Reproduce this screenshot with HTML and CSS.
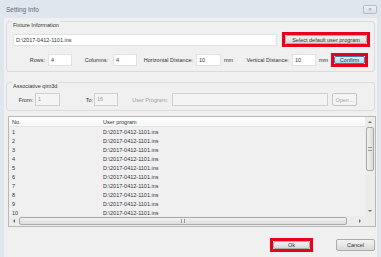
FILE: index.html
```html
<!DOCTYPE html>
<html lang="en">
<head>
  <meta charset="UTF-8">
  <title>Setting Info</title>
  <link rel="stylesheet" href="styles.css">
</head>
<body>
  <div class="window">
    <div class="titlebar">
      <span class="title">Setting Info</span>
      <span class="close">&#x2715;</span>
    </div>

    <div class="client">
      <div class="group fixture">
        <div class="group-label">Fixture Information</div>
        <div class="line">
          <div class="field path">D:\2017-0412-1101.ins</div>
          <div class="mark mark-select"><div class="btn">Select default user program</div></div>
        </div>
        <div class="line params">
          <span class="lbl w-rows">Rows:</span>
          <div class="field num">4</div>
          <span class="lbl w-cols">Columns:</span>
          <div class="field num">4</div>
          <span class="lbl w-hdist">Horizontal Distance:</span>
          <div class="field num wide">10</div>
          <span class="unit w-mm1">mm</span>
          <span class="lbl w-vdist">Vertical Distance:</span>
          <div class="field num">10</div>
          <span class="unit w-mm2">mm</span>
          <div class="mark mark-confirm"><div class="btn btn-hot">Confirm</div></div>
        </div>
      </div>

      <div class="group assoc">
        <div class="group-label">Associative qim3d</div>
        <div class="line">
          <span class="lbl w-from">From:</span>
          <div class="field dis w-in1">1</div>
          <span class="lbl w-to">To:</span>
          <div class="field dis w-in2">16</div>
          <span class="lbl off w-prog">User Program:</span>
          <div class="field dis w-in3"></div>
          <div class="btn btn-off">Open...</div>
        </div>
      </div>

      <div class="list">
        <div class="rows">
          <div class="row head"><span class="c-no">No.</span><span>User program</span></div>
          <div class="row"><span class="c-no">1</span><span>D:\2017-0412-1101.ins</span></div>
          <div class="row"><span class="c-no">2</span><span>D:\2017-0412-1101.ins</span></div>
          <div class="row"><span class="c-no">3</span><span>D:\2017-0412-1101.ins</span></div>
          <div class="row"><span class="c-no">4</span><span>D:\2017-0412-1101.ins</span></div>
          <div class="row"><span class="c-no">5</span><span>D:\2017-0412-1101.ins</span></div>
          <div class="row"><span class="c-no">6</span><span>D:\2017-0412-1101.ins</span></div>
          <div class="row"><span class="c-no">7</span><span>D:\2017-0412-1101.ins</span></div>
          <div class="row"><span class="c-no">8</span><span>D:\2017-0412-1101.ins</span></div>
          <div class="row"><span class="c-no">9</span><span>D:\2017-0412-1101.ins</span></div>
          <div class="row"><span class="c-no">10</span><span>D:\2017-0412-1101.ins</span></div>
        </div>
        <div class="vscroll">
          <span class="arrow"><i class="tri up"></i></span>
          <span class="vthumb"><i class="grip"></i></span>
          <span class="track"></span>
          <span class="arrow"><i class="tri down"></i></span>
        </div>
        <div class="hscroll">
          <span class="arrow"><i class="tri left"></i></span>
          <span class="hthumb"><i class="grip"></i></span>
          <span class="track"></span>
          <span class="arrow"><i class="tri right"></i></span>
        </div>
        <div class="corner"></div>
      </div>

      <div class="footer">
        <div class="mark mark-ok"><div class="btn">Ok</div></div>
        <div class="btn btn-cancel">Cancel</div>
      </div>
    </div>
  </div>
</body>
</html>
```

FILE: styles.css
```css
* { box-sizing: border-box; }
body {
  margin: 0;
  width: 381px;
  height: 257px;
  overflow: hidden;
  font-family: "Liberation Sans", Arial, sans-serif;
  font-size: 5.5px;
  color: #333;
  background: #dfe6ee;
}

.window { height: 257px; display: flex; flex-direction: column; }

.titlebar {
  height: 18px;
  display: flex;
  align-items: center;
  justify-content: space-between;
  padding: 0 4px 0 6px;
}
.title { font-size: 6.5px; color: #5e6b7a; }
.close {
  width: 14px;
  height: 9px;
  border: 1px solid #b3bcc7;
  border-radius: 2px;
  background: linear-gradient(#eef2f6, #d9e0e8);
  color: #8a96a3;
  font-size: 5px;
  line-height: 7px;
  text-align: center;
}

.client {
  flex: 1;
  margin: 0 4px;
  padding: 0 2px;
  background: #f0f0f0;
}

/* group boxes */
.group {
  border: 1px solid #d5dce3;
  border-radius: 3px;
  padding: 0 4px 4px 6px;
}
.fixture { margin-top: 3px; }
.assoc { margin-top: 10px; }
.group-label {
  width: max-content;
  margin: -1px 0 0 -1px;
  padding: 0 1px;
  line-height: 8px;
  height: 8px;
  background: #f0f0f0;
}

.line { display: flex; align-items: center; margin-top: 3px; }
.params { margin-top: 6px; }

.field {
  height: 12px;
  background: #fff;
  border: 1px solid #dfe2e6;
  line-height: 10px;
  padding: 0 2px;
  white-space: nowrap;
}
.path { width: 264px; margin-right: 5px; }
.num { width: 24px; }
.num.wide { width: 25px; }

.lbl { display: flex; justify-content: flex-end; white-space: nowrap; }
.unit { white-space: nowrap; }
.w-rows { width: 32px; margin-right: 3px; }
.w-cols { width: 36px; margin-right: 5px; }
.w-hdist { width: 56px; margin-right: 3px; }
.w-mm1 { width: 19px; margin-left: 3px; }
.w-vdist { width: 46px; margin-right: 3px; }
.w-mm2 { width: 12px; margin-left: 3px; }

.w-from { width: 20px; margin-right: 2px; }
.w-to { width: 33px; margin-right: 1px; }
.w-prog { width: 50px; margin-right: 4px; }
.w-in1 { width: 25px; }
.w-in2 { width: 24px; }
.w-in3 { width: 156px; margin-right: 4px; }
.assoc .field { height: 13px; line-height: 11px; }
.field.dis { background: #f4f4f4; border-color: #cfcfcf; color: #9a9a9a; }
.off { color: #a0a0a0; }

/* buttons */
.btn {
  height: 100%;
  border: 1px solid #acacac;
  border-radius: 2px;
  background: linear-gradient(#f3f3f3, #e6e6e6 50%, #d9d9d9);
  display: flex;
  align-items: center;
  justify-content: center;
  white-space: nowrap;
}
.btn-hot { background: linear-gradient(#e5f4fc, #c4e5f6 50%, #a9d9f2); border-color: #3c7fb1; }
.btn-off { width: 25px; height: 13px; background: #f4f4f4; border-color: #c4c4c4; color: #a6a6a6; }
.btn-cancel { width: 39px; height: 12px; }

.mark { border: 3px solid #e8001c; }
.mark-select { width: 88px; height: 15px; }
.mark-confirm { width: 37px; height: 14px; }
.mark-ok { width: 43px; height: 14px; margin-right: 23px; }

/* list view */
.list {
  margin: 5px -1px 0 2px;
  height: 111px;
  border: 1px solid #b8b8b8;
  display: grid;
  grid-template-columns: 1fr 10px;
  grid-template-rows: 1fr 10px;
  background: #f0f0f0;
}
.rows { overflow: hidden; }
.row { height: 9px; display: flex; align-items: center; white-space: nowrap; }
.row.head {
  height: 10px;
  background: linear-gradient(#ffffff, #f6f7f9);
  border-bottom: 1px solid #e2e5e9;
}
.c-no { width: 94px; padding-left: 3px; }

.vscroll, .hscroll { display: flex; background: #ececec; }
.vscroll { flex-direction: column; }
.track { flex: 1; }
.arrow { width: 10px; height: 10px; display: flex; align-items: center; justify-content: center; }
.tri { width: 0; height: 0; border: 2px solid transparent; }
.tri.up { border-bottom-color: #6a6a6a; border-top-width: 0; }
.tri.down { border-top-color: #6a6a6a; border-bottom-width: 0; }
.tri.left { border-right-color: #6a6a6a; border-left-width: 0; }
.tri.right { border-left-color: #6a6a6a; border-right-width: 0; }

.vthumb, .hthumb {
  border: 1px solid #a8a8a8;
  border-radius: 2px;
  display: flex;
  align-items: center;
  justify-content: center;
}
.vthumb { height: 44px; margin: 0 1px; background: linear-gradient(90deg, #f1f1f1, #dcdcdc); }
.hthumb { width: 328px; margin: 1px 0; background: linear-gradient(#f1f1f1, #dcdcdc); }
.vthumb .grip { width: 4px; height: 4px; border-top: 1px solid #999; border-bottom: 1px solid #999; }
.hthumb .grip { width: 4px; height: 4px; border-left: 1px solid #999; border-right: 1px solid #999; }
.corner { background: #ececec; }

.footer {
  display: flex;
  justify-content: flex-end;
  align-items: center;
  margin-top: 11px;
}
```
